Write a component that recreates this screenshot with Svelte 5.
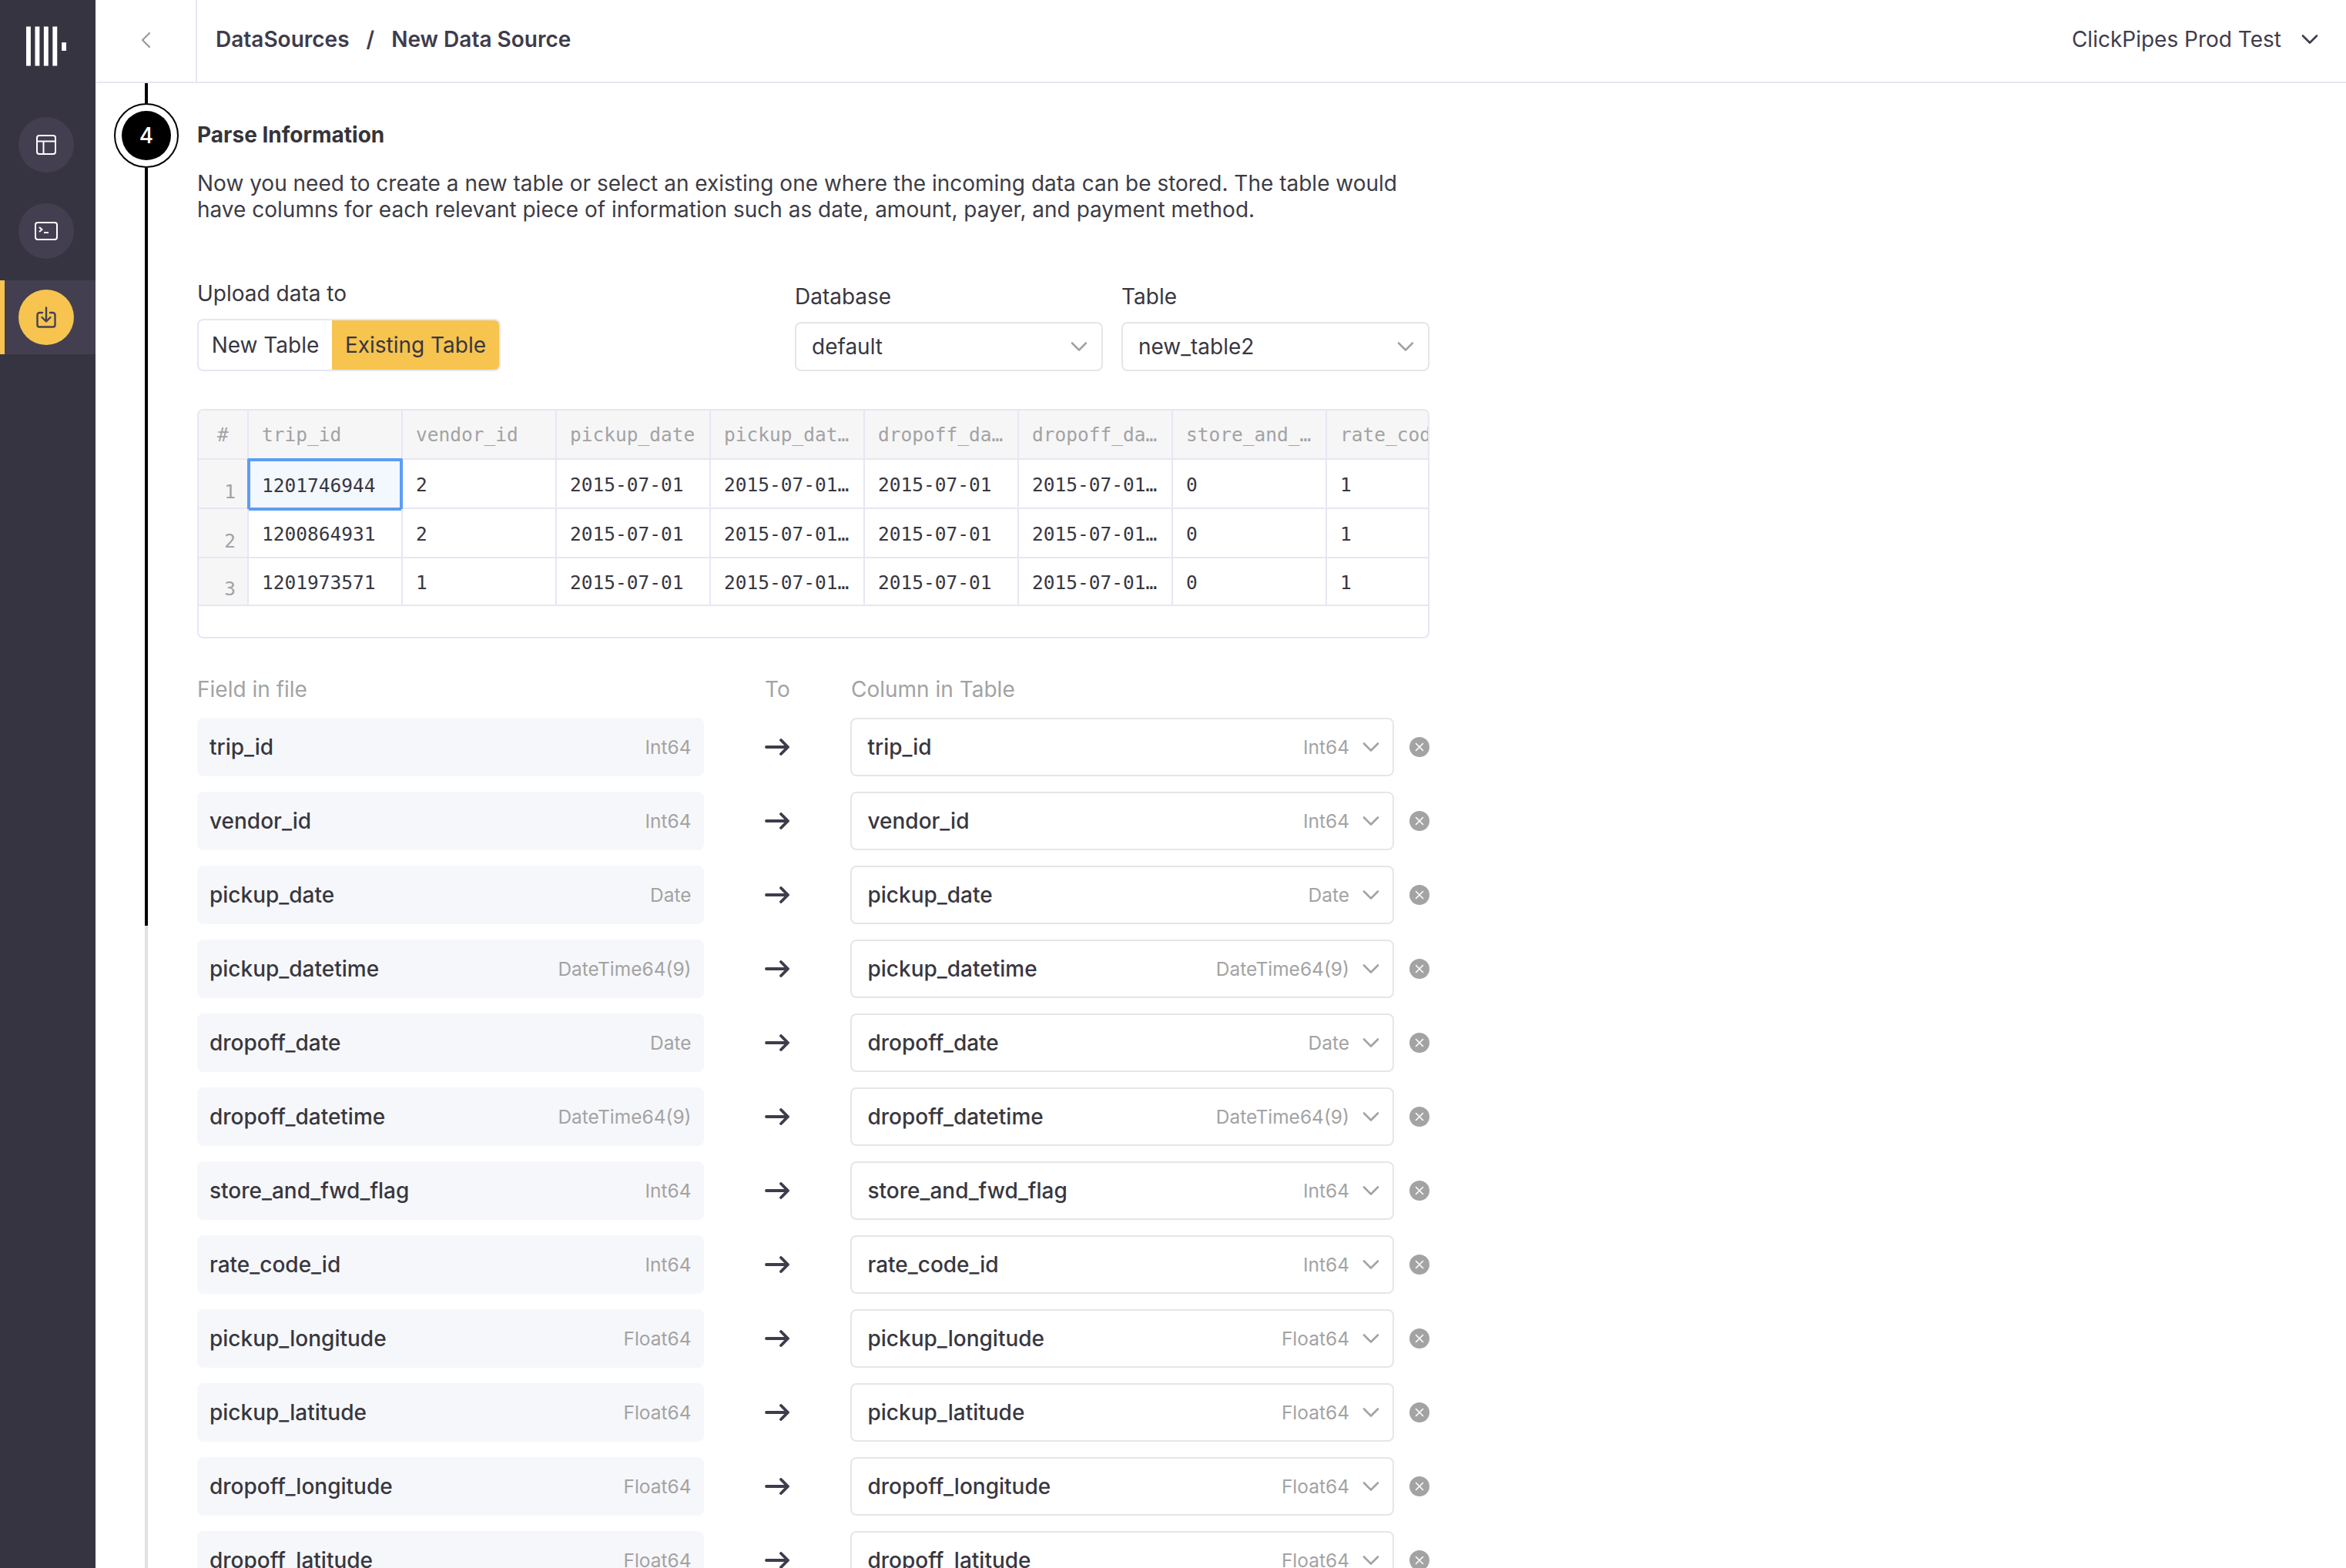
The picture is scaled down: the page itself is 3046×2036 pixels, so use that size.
<script>
  const cols = [
    { name: 'trip_id', vals: ['1201746944', '1200864931', '1201973571'] },
    { name: 'vendor_id', vals: ['2', '2', '1'] },
    { name: 'pickup_date', vals: ['2015-07-01', '2015-07-01', '2015-07-01'] },
    { name: 'pickup_datetime', vals: ['2015-07-01 00:00:00', '2015-07-01 00:00:00', '2015-07-01 00:00:00'] },
    { name: 'dropoff_date', vals: ['2015-07-01', '2015-07-01', '2015-07-01'] },
    { name: 'dropoff_datetime', vals: ['2015-07-01 00:15:26', '2015-07-01 00:22:22', '2015-07-01 00:07:42'] },
    { name: 'store_and_fwd_flag', vals: ['0', '0', '0'] },
    { name: 'rate_code_id', vals: ['1', '1', '1'] }
  ];
  const fields = [
    ['trip_id', 'Int64'],
    ['vendor_id', 'Int64'],
    ['pickup_date', 'Date'],
    ['pickup_datetime', 'DateTime64(9)'],
    ['dropoff_date', 'Date'],
    ['dropoff_datetime', 'DateTime64(9)'],
    ['store_and_fwd_flag', 'Int64'],
    ['rate_code_id', 'Int64'],
    ['pickup_longitude', 'Float64'],
    ['pickup_latitude', 'Float64'],
    ['dropoff_longitude', 'Float64'],
    ['dropoff_latitude', 'Float64']
  ];
</script>

{#snippet chevron(cls)}
  <svg class={cls} viewBox="0 0 22 14" fill="none" stroke="currentColor" stroke-width="2.6" stroke-linecap="round" stroke-linejoin="round"><path d="M2 2.5 11 11.5 20 2.5" /></svg>
{/snippet}

<div class="app">
  <aside class="sidebar">
    <svg class="logo" viewBox="0 0 54 52" fill="#fff">
      <rect x="0" width="6" height="52" /><rect x="11.7" width="6" height="52" /><rect x="23.3" width="6" height="52" /><rect x="35" width="6" height="52" /><rect x="47" y="21" width="6" height="11" />
    </svg>
    <nav class="nav">
      <div class="nav-row">
        <div class="nav-btn">
          <svg width="28" height="28" viewBox="0 0 28 28" fill="none" stroke="#fff" stroke-width="2"><rect x="2" y="2" width="24" height="24" rx="3" /><path d="M2 9.5H26M10.5 9.5V26" /></svg>
        </div>
      </div>
      <div class="nav-row">
        <div class="nav-btn">
          <svg width="32" height="26" viewBox="0 0 32 26" fill="none" stroke="#fff" stroke-width="2"><rect x="2" y="2" width="28" height="22" rx="3" /><path d="M7 8 10.5 11 7 14M13 15H19" /></svg>
        </div>
      </div>
      <div class="nav-row active">
        <div class="nav-btn on">
          <svg width="28" height="28" viewBox="0 0 28 28" fill="none" stroke="#454152" stroke-width="2.4" stroke-linecap="round" stroke-linejoin="round"><path d="M9 8H5.5A3 3 0 0 0 2.500 11V24A2.500 2.500 0 0 0 5 26.500H23A2.500 2.500 0 0 0 25.500 24V11A3 3 0 0 0 22.500 8H19" /><path d="M14 1.500V19M8.500 14 14 19.500 19.500 14" /></svg>
        </div>
      </div>
    </nav>
  </aside>

  <div class="main">
    <header class="topbar">
      <div class="back">
        <svg width="14" height="22" viewBox="0 0 14 22" fill="none" stroke="#9a9a9a" stroke-width="2.2" stroke-linecap="round" stroke-linejoin="round"><path d="M12 2 3 11 12 20" /></svg>
      </div>
      <div class="crumbs"><span>DataSources</span><span class="sep">/</span><span>New Data Source</span></div>
      <div class="org">
        <span>ClickPipes Prod Test</span>
        {@render chevron('org-chev')}
      </div>
    </header>

    <div class="body">
      <div class="rail">
        <div class="seg top"></div>
        <div class="step"><div class="step-in">4</div></div>
        <div class="seg done"></div>
        <div class="seg rest"></div>
      </div>

      <main class="content">
        <h2>Parse Information</h2>
        <p class="intro">Now you need to create a new table or select an existing one where the incoming data can be stored. The table would<br />have columns for each relevant piece of information such as date, amount, payer, and payment method.</p>

        <div class="form-row">
          <div class="upload">
            <div class="label up">Upload data to</div>
            <div class="toggle">
              <div class="opt">New Table</div>
              <div class="opt sel">Existing Table</div>
            </div>
          </div>
          <div class="selects">
            <div class="sel-field">
              <div class="label">Database</div>
              <div class="select"><span>default</span>{@render chevron('sel-chev')}</div>
            </div>
            <div class="sel-field">
              <div class="label">Table</div>
              <div class="select"><span>new_table2</span>{@render chevron('sel-chev')}</div>
            </div>
          </div>
        </div>

        <div class="preview">
          <div class="grid">
            <div class="gc head num-head">#</div>
            {#each cols as c}
              <div class="gc head"><span class="trunc">{c.name}</span></div>
            {/each}
            {#each [0, 1, 2] as r}
              <div class="gc rownum">{r + 1}</div>
              {#each cols as c, i}
                <div class="gc cell" class:focus={r === 0 && i === 0}><span class="trunc">{c.vals[r]}</span></div>
              {/each}
            {/each}
          </div>
        </div>

        <div class="map-head">
          <div class="mf">Field in file</div>
          <div class="mt">To</div>
          <div class="mc">Column in Table</div>
        </div>

        <div class="rows">
          {#each fields as [name, type]}
            <div class="row">
              <div class="from"><span class="nm">{name}</span><span class="type">{type}</span></div>
              <div class="arrow">
                <svg width="32" height="22" viewBox="0 0 32 22" fill="none" stroke="#3f3c4c" stroke-width="3.8" stroke-linecap="round" stroke-linejoin="round"><path d="M2 11H30M21 2 30 11 21 20" /></svg>
              </div>
              <div class="to">
                <span class="nm to-name">{name}</span>
                <span class="type">{type}</span>
                {@render chevron('row-chev')}
              </div>
              <svg class="rm" width="26" height="26" viewBox="0 0 26 26"><circle cx="13" cy="13" r="13" fill="#a3a3a3" /><path d="M8.500 8.500 17.500 17.500M17.500 8.500 8.500 17.500" stroke="#fff" stroke-width="1.600" stroke-linecap="round" /></svg>
            </div>
          {/each}
        </div>
      </main>
    </div>
  </div>
</div>

<style>
  :global(body) {
    margin: 0;
    background: #fff;
    overflow: hidden;
  }
  .app {
    display: flex;
    width: 3046px;
    height: 2036px;
    overflow: hidden;
    font-family: Inter, "Liberation Sans", sans-serif;
    font-size: 28px;
    color: #38373f;
  }
  .sidebar {
    flex: 0 0 124px;
    background: #373442;
    display: flex;
    flex-direction: column;
  }
  .logo {
    width: 53px;
    height: 52px;
    margin: 34px 0 0 34px;
  }
  .nav {
    width: 100%;
    margin-top: 66px;
    display: flex;
    flex-direction: column;
  }
  .nav-row {
    height: 72px;
    margin-bottom: 40px;
    padding-left: 24px;
    display: flex;
    align-items: center;
  }
  .nav-row.active {
    height: 96px;
    margin-top: -12px;
    background: #433f50;
    border-left: 6px solid #f6c44f;
    box-sizing: border-box;
    padding-left: 18px;
  }
  .nav-btn {
    width: 72px;
    height: 72px;
    border-radius: 50%;
    background: #433f50;
    display: flex;
    align-items: center;
    justify-content: center;
  }
  .nav-btn.on { background: #f6c44f; }

  .main {
    flex: 1;
    min-width: 0;
    display: flex;
    flex-direction: column;
  }
  .topbar {
    flex: 0 0 108px;
    box-sizing: border-box;
    display: flex;
    align-items: center;
    border-bottom: 2px solid #e7e6f3;
    color: #3f3c4c;
    line-height: 34px;
  }
  .back {
    width: 130px;
    height: 100%;
    border-right: 2px solid #e7e6f3;
    display: flex;
    align-items: center;
    justify-content: center;
    padding-bottom: 3px;
    box-sizing: content-box;
    height: calc(100% - 3px);
    flex: none;
  }
  .crumbs {
    margin: -4px 0 0 24px;
    font-weight: 600;
    display: flex;
    gap: 22px;
  }
  .org {
    margin: -4px 36px 0 auto;
    display: flex;
    align-items: center;
    gap: 26px;
  }
  .org-chev { width: 22px; height: 14px; }

  .body {
    flex: 1;
    min-height: 0;
    display: flex;
  }
  .rail {
    flex: 0 0 132px;
    display: flex;
    flex-direction: column;
    align-items: center;
  }
  .seg { width: 4px; }
  .top { height: 26px; background: #000; }
  .done { height: 984px; background: #000; }
  .rest { flex: 1; background: #e2e2e2; }
  .step {
    width: 84px;
    height: 84px;
    box-sizing: border-box;
    border: 2px solid #000;
    border-radius: 50%;
    padding: 8px;
    flex: none;
  }
  .step-in {
    width: 64px;
    height: 64px;
    border-radius: 50%;
    background: #000;
    color: #fff;
    font-weight: 500;
    display: flex;
    align-items: center;
    justify-content: center;
  }

  .content {
    width: 1600px;
    padding-top: 50px;
  }
  h2 {
    margin: 0;
    font-size: 28px;
    line-height: 34px;
    font-weight: 700;
    color: #35343a;
  }
  .intro {
    margin: 29px 0 0;
    line-height: 34px;
    color: #3d3c45;
  }
  .form-row {
    margin-top: 79px;
    display: flex;
    justify-content: space-between;
  }
  .label {
    line-height: 34px;
    height: 34px;
  }
  .up { margin-top: -4px; }
  .toggle {
    margin-top: 16px;
    display: flex;
    width: 394px;
    height: 68px;
    box-sizing: border-box;
    border: 2px solid #e7e6f3;
    border-radius: 8px;
    overflow: hidden;
  }
  .opt {
    flex: 0 0 173px;
    display: flex;
    align-items: center;
    justify-content: center;
  }
  .opt.sel {
    flex: 1;
    background: #f6c44f;
  }
  .selects {
    display: flex;
    gap: 24px;
  }
  .sel-field { width: 400px; }
  .select {
    margin-top: 16px;
    height: 64px;
    box-sizing: border-box;
    border: 2px solid #e6e6e6;
    border-radius: 8px;
    padding: 0 18px 0 20px;
    display: flex;
    align-items: center;
    justify-content: space-between;
  }
  .sel-chev {
    width: 22px;
    height: 14px;
    color: #a3a3a3;
  }

  .preview {
    margin-top: 49px;
    height: 298px;
    box-sizing: border-box;
    border: 2px solid #e7e6f3;
    border-radius: 8px;
    overflow: hidden;
    font-family: "DejaVu Sans Mono", monospace;
    font-size: 24.5px;
  }
  .grid {
    display: grid;
    grid-template-columns: 65px repeat(8, 200px);
    grid-template-rows: 64px 64px 64px 62px;
    width: 1665px;
  }
  .gc {
    box-sizing: border-box;
    border-right: 2px solid #e7e6f3;
    border-bottom: 2px solid #e7e6f3;
    padding: 0 15px 0 17px;
    display: flex;
    align-items: center;
    min-width: 0;
  }
  .head {
    background: #f6f6f7;
    color: #a3a3a3;
  }
  .num-head {
    justify-content: center;
    padding: 0;
  }
  .rownum {
    background: #f6f6f7;
    color: #a3a3a3;
    justify-content: flex-end;
    align-items: flex-end;
    padding: 0 15px 6px 0;
  }
  .cell {
    color: #38373f;
    padding-top: 3px;
  }
  .focus {
    border: 4px solid #5b9df5;
    border-radius: 2px;
    background: #f3f7fe;
    padding: 3px 13px 0 15px;
    margin: -2px 0 -2px -2px;
  }
  .trunc {
    white-space: nowrap;
    overflow: hidden;
    text-overflow: ellipsis;
    min-width: 0;
  }

  .map-head {
    margin-top: 49px;
    display: flex;
    line-height: 34px;
    color: #a3a3a3;
  }
  .mf { width: 737px; }
  .mt { width: 112px; }
  .rows {
    margin-top: 20px;
    display: flex;
    flex-direction: column;
    gap: 20px;
  }
  .row {
    display: flex;
    align-items: center;
    height: 76px;
    flex: none;
  }
  .nm { font-weight: 500; }
  .from {
    width: 658px;
    height: 100%;
    box-sizing: border-box;
    background: #f6f7fa;
    border-radius: 8px;
    padding: 0 16px;
    display: flex;
    align-items: center;
    justify-content: space-between;
  }
  .type {
    font-size: 24.5px;
    color: #a3a3a3;
  }
  .arrow {
    width: 191px;
    padding-left: 79px;
    box-sizing: border-box;
    display: flex;
    align-items: center;
  }
  .to {
    width: 706px;
    height: 100%;
    box-sizing: border-box;
    border: 2px solid #e6e6e6;
    border-radius: 8px;
    padding: 0 17px 0 20px;
    display: flex;
    align-items: center;
    gap: 17px;
  }
  .to-name { margin-right: auto; }
  .row-chev {
    width: 22px;
    height: 14px;
    color: #a3a3a3;
  }
  .rm {
    margin-left: 20px;
    flex: none;
  }
</style>
